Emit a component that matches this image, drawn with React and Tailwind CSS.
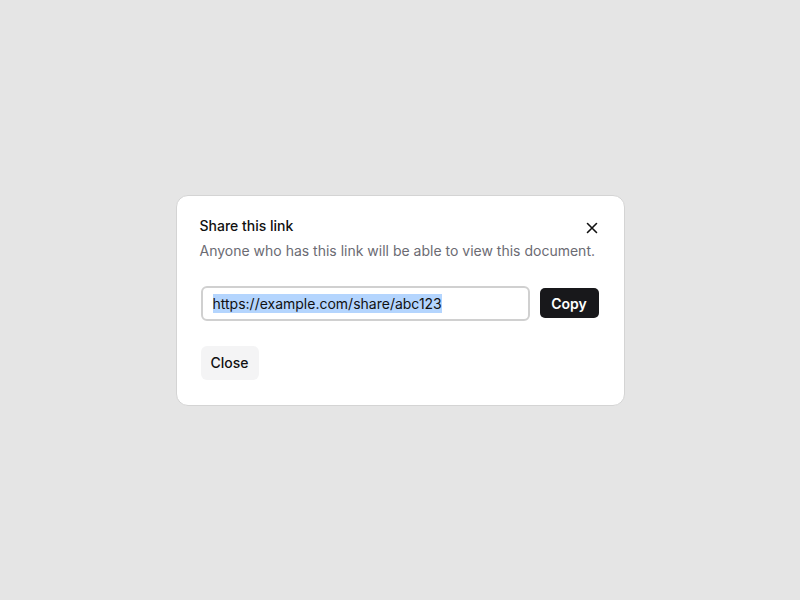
import React from 'react';

const App = () => {
  return (
    <div className="w-[800px] h-[600px] bg-[#e5e5e5] flex items-center justify-center font-['Inter',sans-serif]">
      <div className="relative w-[449px] h-[211px] bg-white border border-[#d4d4d4] rounded-xl pl-6 pr-6 pt-[20px] pb-6 flex flex-col">
        <button className="absolute top-[22px] right-[22px] w-5 h-5 flex items-center justify-center text-[#111]">
          <svg width="12" height="12" viewBox="0 0 12 12" fill="none" stroke="currentColor" strokeWidth="1.6" strokeLinecap="round">
            <path d="M1.5 1.5l9 9M10.5 1.5l-9 9" />
          </svg>
        </button>
        <div className="flex flex-col gap-[5px] -ml-px">
          <h2 className="text-[14px] leading-[20px] font-medium text-[#111]">Share this link</h2>
          <p className="text-[14px] leading-[20px] text-[#6b6b73] whitespace-nowrap">Anyone who has this link will be able to view this document.</p>
        </div>
        <div className="mt-[25px] flex items-center gap-[10px]">
          <div className="w-[329px] h-[35px] border-2 border-[#d0d0d0] rounded-md px-[10px] flex items-center">
            <span className="bg-[#b4d5fe] text-[14px] leading-[19px] text-[#111]">https://example.com/share/abc123</span>
          </div>
          <button className="h-[30px] w-[59px] bg-[#18181b] text-white text-[14px] font-semibold rounded-[5px]">Copy</button>
        </div>
        <div className="mt-[25px]">
          <button className="h-[34px] w-[58px] bg-[#f4f4f5] text-[#111] text-[14px] font-medium rounded-md">Close</button>
        </div>
      </div>
    </div>
  );
};

export default App;
